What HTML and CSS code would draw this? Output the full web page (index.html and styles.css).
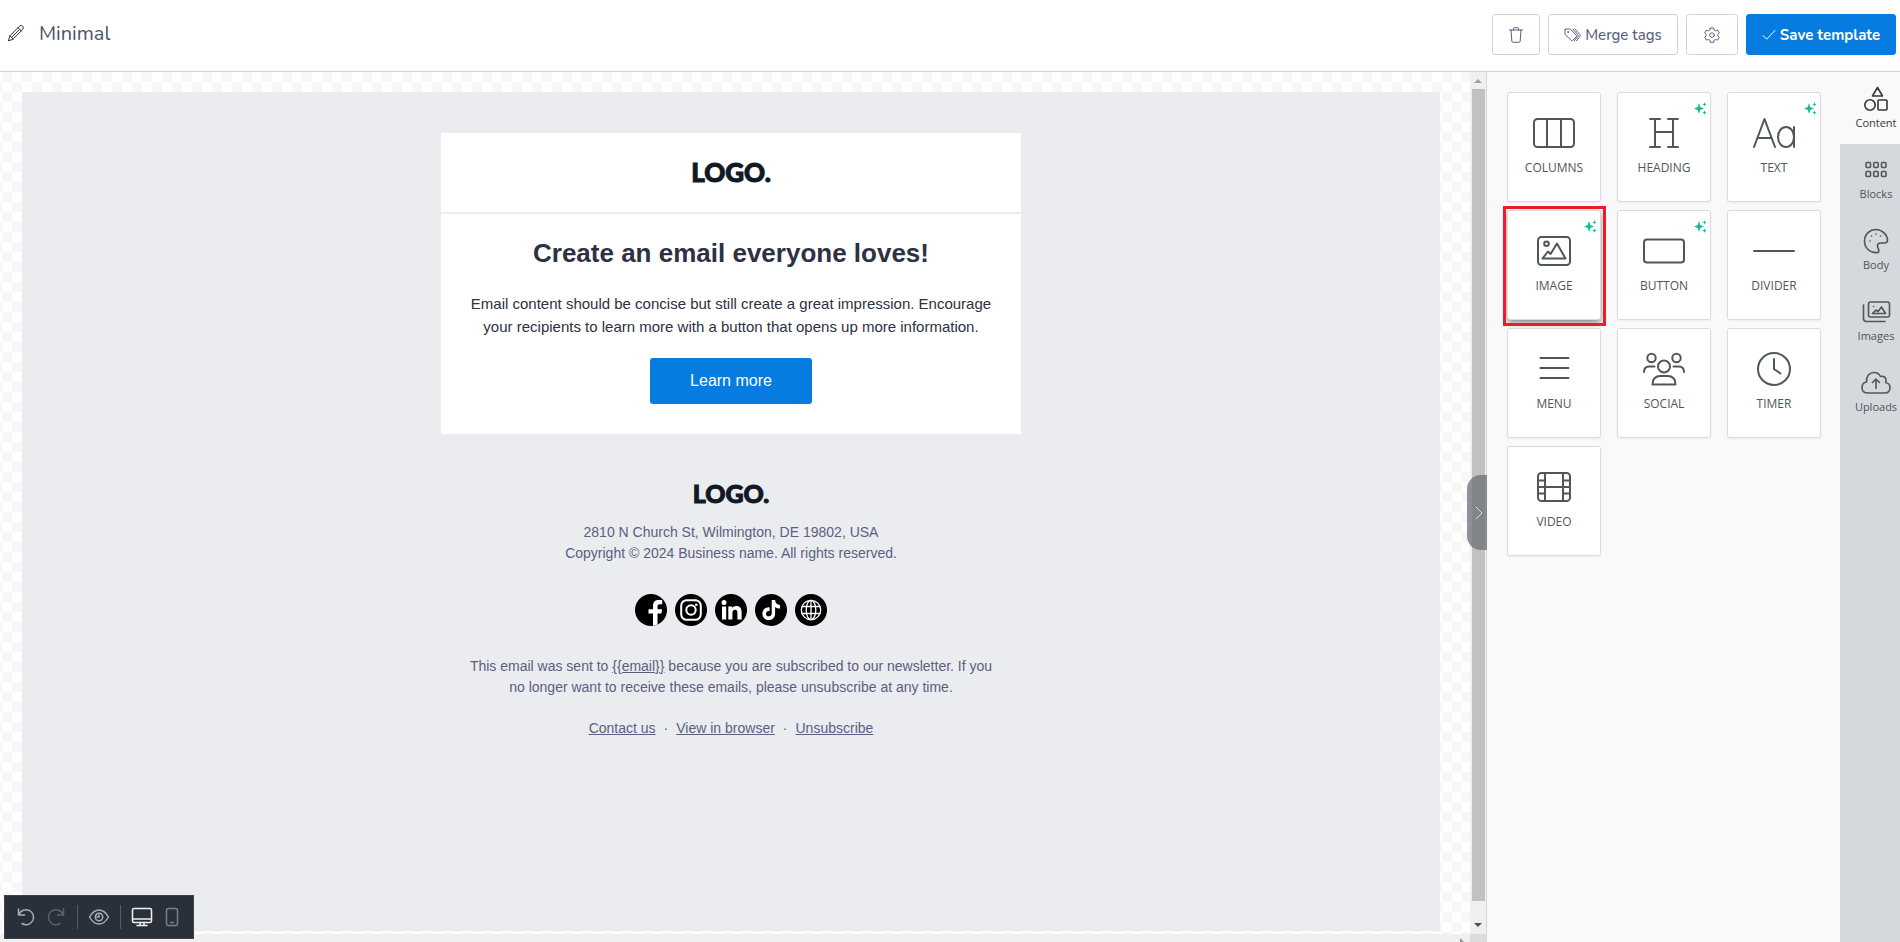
FILE: index.html
```html
<!DOCTYPE html>
<html lang="en">
<head>
    <meta charset="UTF-8">
    <meta name="viewport" content="width=device-width, initial-scale=1.0">
    <title>Minimal</title>
    <link rel="stylesheet" href="styles.css">
</head>
<body>

    <header class="topbar">
        <div class="template-name">
            <svg width="18" height="18" viewBox="0 0 18 18"><path d="M1.500 16.500l1.400-4.700L12.500 2.200a2 2 0 0 1 3.200 3.200L6.200 15zM2.900 11.800L6.200 15M11 3.700L14.300 7M5 13L12.600 5.400"/></svg>
            <h1>Minimal</h1>
        </div>
        <div class="actions">
            <button class="btn btn-trash" aria-label="Delete">
                <svg width="16" height="16" viewBox="0 0 16 16"><path d="M1.500 3h13M5.500 3V1.500q0-.8.8-.8h3.400q.8 0 .8.8V3M3 3l.8 11q.1 1.300 1.300 1.300h5.800q1.200 0 1.300-1.300L13 3"/></svg>
            </button>
            <button class="btn btn-tags">
                <svg width="17" height="16" viewBox="0 0 17 16"><path d="M1 2.500v4.300q0 .6.4 1l5.800 5.600q.7.700 1.400 0l3.700-3.700q.7-.7 0-1.400L6.700 2.500q-.4-.5-1-.5H2q-1 0-1 .5zM8.700 2l5 5.600q.9 1 0 2L10.200 14M11 2l4.700 5.300q1 1.100 0 2.300L12.300 14"/><circle cx="4" cy="5" r=".5"/></svg>
                Merge tags
            </button>
            <button class="btn btn-settings" aria-label="Settings">
                <svg width="16" height="16" viewBox="0 0 16 16"><path d="M6.300 1h3.400l.5 2 1.400.8 2-.6 1.700 2.900-1.500 1.300v1.500l1.500 1.300-1.700 2.900-2-.6-1.400.8-.5 2H6.300l-.5-2-1.400-.8-2 .6L.7 10.200l1.500-1.300V7.400L.7 6.100l1.700-2.900 2 .6L5.800 3z"/><circle cx="8" cy="8.100" r="2.300"/></svg>
            </button>
            <button class="btn btn-save">
                <svg width="14" height="12" viewBox="0 0 14 12"><path d="M1 6.500l3.700 3.700L13 1.500"/></svg>
                Save template
            </button>
        </div>
    </header>

    <div class="editor">
        <main class="stage">
            <div class="viewport">
                <div class="canvas">
                    <div class="email">
                        <div class="email-head"><span class="logo">LOGO.</span></div>
                        <div class="email-body">
                            <h2>Create an email everyone loves!</h2>
                            <p>Email content should be concise but still create a great impression. Encourage your recipients to learn more with a button that opens up more information.</p>
                            <a class="cta" href="#">Learn more</a>
                        </div>
                        <footer class="email-footer">
                            <span class="logo logo-small">LOGO.</span>
                            <p>2810 N Church St, Wilmington, DE 19802, USA<br>Copyright © 2024 Business name. All rights reserved.</p>
                            <div class="socials">
                                <a href="#" aria-label="Facebook"><svg viewBox="0 0 32 32"><circle cx="16" cy="16" r="16"/><path class="w" d="M18 31.900V19.500h-4.500v-4.300H18v-3.400c0-4 2.200-5.800 5.600-5.800h3.600v4.200h-2.400c-1.700 0-2.300.7-2.300 2.100v2.900h4.600l-.7 4.300h-3.900v11z"/></svg></a>
                                <a href="#" aria-label="Instagram"><svg viewBox="0 0 32 32"><circle cx="16" cy="16" r="16"/><rect class="l" x="6.200" y="6.200" width="19.600" height="19.600" rx="5.500"/><circle class="l" cx="16" cy="16" r="4.700"/><circle class="w" cx="21.300" cy="10.700" r="1.300"/></svg></a>
                                <a href="#" aria-label="LinkedIn"><svg viewBox="0 0 32 32"><circle cx="16" cy="16" r="16"/><circle class="w" cx="9" cy="8.500" r="2.500"/><path class="w" d="M7 12.400h4.200V25.500H7zM13.300 12.400h4v1.800c.7-1.200 2.100-2.100 4-2.100 4 0 5.300 2.400 5.300 6.300v7.100h-4.200v-6.500c0-1.800-.3-3.200-2.300-3.200-1.900 0-2.700 1.300-2.700 3.200v6.500h-4.100z"/></svg></a>
                                <a href="#" aria-label="TikTok"><svg viewBox="0 0 32 32"><circle cx="16" cy="16" r="16"/><path class="w" d="M16.700 6h3.400c.2 2.800 1.900 4.700 4.900 5v3.500c-1.900 0-3.500-.5-4.900-1.500v6.700c0 8.300-12.600 8.500-12.700 0 0-3.900 3.200-6.800 7.200-6.300v3.600c-2-.5-3.600.7-3.600 2.700 0 3.500 5.700 3.500 5.700-.3z"/></svg></a>
                                <a href="#" aria-label="Website"><svg viewBox="0 0 32 32"><circle cx="16" cy="16" r="16"/><g class="g"><circle cx="16" cy="16" r="9.700"/><ellipse cx="16" cy="16" rx="4.800" ry="9.700"/><path d="M16 6.500v19M7 12.500h18M7 19.500h18"/></g></svg></a>
                            </div>
                            <p>This email was sent to <a href="#">{{email}}</a> because you are subscribed to our newsletter. If you no longer want to receive these emails, please unsubscribe at any time.</p>
                            <nav class="email-links">
                                <a href="#">Contact us</a><span>·</span><a href="#">View in browser</a><span>·</span><a href="#">Unsubscribe</a>
                            </nav>
                        </footer>
                    </div>
                </div>
                <div class="hscroll"><i></i></div>
            </div>
            <div class="vscroll"><i class="up"></i><div class="thumb"></div><i class="down"></i><div class="corner"></div></div>

            <div class="device-bar">
                <button aria-label="Undo"><svg width="20" height="20" viewBox="0 0 20 20"><path d="M2.500 2v6h6M3 7.500a7.500 7.500 0 1 1 3 9"/></svg></button>
                <button class="dim" aria-label="Redo"><svg width="20" height="20" viewBox="0 0 20 20"><path d="M17.500 2v6h-6M17 7.500a7.500 7.500 0 1 0-3 9"/></svg></button>
                <hr>
                <button aria-label="Preview"><svg width="22" height="18" viewBox="0 0 22 18"><path d="M1.500 9Q5.500 2 11 2t9.500 7Q16.500 16 11 16T1.500 9z"/><circle cx="11" cy="9" r="3.700"/><path d="M11 7v2H9"/></svg></button>
                <hr>
                <button class="on" aria-label="Desktop"><svg width="22" height="20" viewBox="0 0 22 20"><rect x="1.500" y="1.500" width="19" height="14" rx="1.500"/><path d="M1.500 12h19M9 15.500V18m4-2.500V18m-7 .5h10"/></svg></button>
                <button class="dim phone" aria-label="Mobile"><svg width="14" height="20" viewBox="0 0 14 20"><rect x="1.500" y="1.500" width="11" height="17" rx="2"/><path d="M5.500 15.500h3"/></svg></button>
            </div>
            <button class="collapse" aria-label="Collapse panel"><svg width="8" height="14" viewBox="0 0 8 14"><path d="M1 1l6 6-6 6"/></svg></button>
        </main>

        <aside class="panel">
            <div class="tools">
                <button class="tool">
                    <svg class="icon" viewBox="0 0 44 36"><rect x="2" y="4" width="40" height="28" rx="3.500"/><path d="M15 4v28M29 4v28"/></svg>
                    <span>COLUMNS</span>
                </button>
                <button class="tool ai">
                    <svg class="icon" viewBox="0 0 44 36"><path d="M8 4h10M26 4h10M8 32h10M26 32h10M13 4v28M31 4v28M13 17h18"/></svg>
                    <span>HEADING</span>
                    <svg class="spark" viewBox="0 0 13 13"><path d="M5 1l1.300 4L10 6.500 6.300 8 5 12 3.700 8 0 6.500 3.700 5zM10.500 0l.6 1.700 1.700.6-1.700.6-.6 1.700-.6-1.700-1.700-.6 1.700-.6zM10.500 8.300l.6 1.700 1.700.6-1.700.6-.6 1.700-.6-1.700-1.700-.6 1.700-.6z"/></svg>
                </button>
                <button class="tool ai">
                    <svg class="icon" viewBox="0 0 44 36"><path d="M2 32L12.500 4 23 32M5.500 23h14M42 12v20"/><ellipse cx="34" cy="22" rx="8" ry="10"/></svg>
                    <span>TEXT</span>
                    <svg class="spark" viewBox="0 0 13 13"><path d="M5 1l1.300 4L10 6.500 6.300 8 5 12 3.700 8 0 6.500 3.700 5zM10.500 0l.6 1.700 1.700.6-1.700.6-.6 1.700-.6-1.700-1.700-.6 1.700-.6zM10.500 8.300l.6 1.700 1.700.6-1.700.6-.6 1.700-.6-1.700-1.700-.6 1.700-.6z"/></svg>
                </button>
                <button class="tool ai highlighted">
                    <svg class="icon" viewBox="0 0 44 36"><rect x="6" y="4" width="32" height="28" rx="3.500"/><circle cx="14.500" cy="10.800" r="2.300"/><path d="M10.500 25.500l5.500-7 2.500 2.500L25 10.500 33.500 25.500z"/></svg>
                    <span>IMAGE</span>
                    <svg class="spark" viewBox="0 0 13 13"><path d="M5 1l1.300 4L10 6.500 6.300 8 5 12 3.700 8 0 6.500 3.700 5zM10.500 0l.6 1.700 1.700.6-1.700.6-.6 1.700-.6-1.700-1.700-.6 1.700-.6zM10.500 8.300l.6 1.700 1.700.6-1.700.6-.6 1.700-.6-1.700-1.700-.6 1.700-.6z"/></svg>
                </button>
                <button class="tool ai">
                    <svg class="icon" viewBox="0 0 44 36"><rect x="2" y="6.500" width="40" height="23" rx="3"/></svg>
                    <span>BUTTON</span>
                    <svg class="spark" viewBox="0 0 13 13"><path d="M5 1l1.300 4L10 6.500 6.300 8 5 12 3.700 8 0 6.500 3.700 5zM10.500 0l.6 1.700 1.700.6-1.700.6-.6 1.700-.6-1.700-1.700-.6 1.700-.6zM10.500 8.300l.6 1.700 1.700.6-1.700.6-.6 1.700-.6-1.700-1.700-.6 1.700-.6z"/></svg>
                </button>
                <button class="tool">
                    <svg class="icon" viewBox="0 0 44 36"><path d="M2 18h40"/></svg>
                    <span>DIVIDER</span>
                </button>
                <button class="tool">
                    <svg class="icon" viewBox="0 0 44 36"><path d="M8.500 7h28M8.500 17h28M8.500 27h28"/></svg>
                    <span>MENU</span>
                </button>
                <button class="tool">
                    <svg class="icon" viewBox="0 0 44 36"><circle cx="9.500" cy="7" r="4.200"/><circle cx="34.500" cy="7" r="4.200"/><circle cx="22" cy="15.500" r="6"/><path d="M2 21q0-5.500 5-5.500h5.500M42 21q0-5.500-5-5.500h-5.500M10.500 33.500q0-8.500 8-8.500h7q8 0 8 8.500z"/></svg>
                    <span>SOCIAL</span>
                </button>
                <button class="tool">
                    <svg class="icon" viewBox="0 0 44 36"><circle cx="22" cy="18" r="16"/><path d="M22 8v10l6.500 4.500"/></svg>
                    <span>TIMER</span>
                </button>
                <button class="tool">
                    <svg class="icon" viewBox="0 0 44 36"><rect x="6" y="4" width="32" height="28" rx="3.500"/><path d="M13 4v28M31 4v28M13 18h18M6 11.500h7M6 18h7M6 24.500h7M31 11.500h7M31 18h7M31 24.500h7"/></svg>
                    <span>VIDEO</span>
                </button>
            </div>
            <nav class="tabs">
                <button class="tab active">
                    <svg width="30" height="26" viewBox="0 0 30 26"><path d="M16.500 1.500l5 8.500h-10z"/><circle cx="9" cy="19" r="5.200"/><rect x="17" y="14" width="9" height="10" rx="1"/></svg>
                    <span>Content</span>
                </button>
                <button class="tab">
                    <svg width="30" height="26" viewBox="0 0 30 26"><rect x="5" y="5.500" width="4.500" height="5" rx="1"/><rect x="12.700" y="5.500" width="4.500" height="5" rx="1"/><rect x="20.500" y="5.500" width="4.500" height="5" rx="1"/><rect x="5" y="14.500" width="4.500" height="5" rx="1"/><rect x="12.700" y="14.500" width="4.500" height="5" rx="1"/><rect x="20.500" y="14.500" width="4.500" height="5" rx="1"/></svg>
                    <span>Blocks</span>
                </button>
                <button class="tab">
                    <svg width="30" height="26" viewBox="0 0 30 26"><path d="M17 24.500C9 25.500 3.500 20 3.500 13S9 1.500 15 1.500 26.500 7 26.500 12q0 3-3 3h-4q-3 0-3 3 0 1.500 1 3 .8 2.500-.5 3.500z"/><path d="M9 13h.1M10.500 8h.1M15 6h.1M19.500 8h.1"/></svg>
                    <span>Body</span>
                </button>
                <button class="tab">
                    <svg width="30" height="26" viewBox="0 0 30 26"><rect x="7.500" y="3" width="21" height="15" rx="2"/><path d="M2.500 6v13.500q0 3 3 3H24M11.500 14.500l3.500-3.500 2 1.500L20.500 8l4 6.500zM12.500 7.500h.1"/></svg>
                    <span>Images</span>
                </button>
                <button class="tab">
                    <svg width="30" height="26" viewBox="0 0 30 26"><path d="M7 23C3 23 1 20.500 1 17.500 1 14.500 3 12.500 5.500 12 5 6 8.500 2.500 13 2.500q4.500 0 6.500 4c3-.8 5.500 1 5.500 3.500 0 1 0 2-.5 2.500 3 .5 4.500 2.500 4.500 5 0 3.500-2 5.500-5.500 5.500zM15 18.500V9M11.500 12.500L15 9l3.500 3.500"/></svg>
                    <span>Uploads</span>
                </button>
            </nav>
        </aside>
    </div>

</body>
</html>
```
FILE: styles.css
```css
* {
    box-sizing: border-box;
}
body {
    margin: 0;
    height: 100vh;
    display: flex;
    flex-direction: column;
    overflow: hidden;
    background-color: white;
    font-family: "Open Sans", "Noto Sans", sans-serif;
}
svg {
    fill: none;
    stroke: currentColor;
    stroke-linecap: round;
    stroke-linejoin: round;
}
button {
    font-family: inherit;
    border: none;
    padding: 0;
    cursor: pointer;
}

/* top bar */
.topbar {
    flex: none;
    height: 72px;
    padding: 14px 4px 0 7px;
    display: flex;
    justify-content: space-between;
    align-items: flex-start;
    border-bottom: 1px solid #cfd3df;
}
.template-name {
    display: flex;
    align-items: center;
    gap: 14px;
    height: 38px;
    color: #2d3142;
}
.template-name h1 {
    margin: 0;
    font-family: Nunito, "Noto Sans", sans-serif;
    font-size: 20px;
    font-weight: 400;
    color: #4a5568;
}
.actions {
    display: flex;
    gap: 8px;
}
.btn {
    height: 41px;
    display: flex;
    align-items: center;
    justify-content: center;
    gap: 4px;
    border: 1px solid #cfd3df;
    border-radius: 3px;
    background-color: white;
    color: #596080;
    font-family: Nunito, "Noto Sans", sans-serif;
    font-size: 15px;
    font-weight: 500;
}
.btn-trash {
    width: 48px;
}
.btn-tags {
    width: 130px;
}
.btn-settings {
    width: 52px;
}
.btn-save {
    width: 150px;
    border-color: #067ce0;
    background-color: #067ce0;
    color: white;
    font-weight: 700;
}

/* editor */
.editor {
    flex: 1;
    min-height: 0;
    display: flex;
}
.stage {
    position: relative;
    flex: 1;
    min-width: 0;
    display: flex;
    border-right: 1px solid #d4d6d9;
}
.viewport {
    flex: 1;
    min-width: 0;
    display: flex;
    flex-direction: column;
    background: conic-gradient(#ffffff 25%, #f7f7f7 0 50%, #ffffff 0 75%, #f7f7f7 0) 2px 0 / 20px 20px;
}
.canvas {
    flex: 1;
    margin: 20px 30px 3px 22px;
    padding: 41px 0;
    background-color: #ebecf0;
}
.email {
    max-width: 580px;
    margin: 0 auto;
    text-align: center;
    font-family: Arial, "Liberation Sans", sans-serif;
}
.email-head {
    height: 79px;
    padding-bottom: 2px;
    display: flex;
    align-items: center;
    justify-content: center;
    background-color: white;
}
.logo {
    font-family: Lato, sans-serif;
    font-size: 26px;
    font-weight: 900;
    line-height: 30px;
    color: #101924;
    -webkit-text-stroke: 1px #101924;
}
.logo-small {
    display: block;
    font-size: 25px;
}
.email-body {
    margin-top: 2px;
    padding: 23px 24px 30px;
    background-color: white;
}
.email-body h2 {
    margin: 0 0 23px;
    font-size: 26px;
    line-height: 32px;
    color: #2d3142;
}
.email-body p {
    margin: 0 0 20px;
    font-size: 15px;
    line-height: 23px;
    color: #2d3142;
}
.cta {
    display: inline-block;
    padding: 0 40px;
    border-radius: 3px;
    background-color: #067ce0;
    color: white;
    font-size: 16px;
    line-height: 46px;
    text-decoration: none;
    vertical-align: top;
}
.email-footer {
    padding: 44px 24px 0;
    font-size: 14px;
    line-height: 21px;
    color: #596080;
}
.email-footer p {
    margin: 14px 0 20px;
}
.email-footer a {
    color: inherit;
}
.socials {
    display: flex;
    justify-content: center;
    gap: 8px;
    margin: 30px 0;
}
.socials svg {
    display: block;
    width: 32px;
    height: 32px;
    fill: black;
    stroke: none;
}
.socials .w {
    fill: white;
}
.socials .l {
    fill: none;
    stroke: white;
    stroke-width: 2;
}
.socials .g {
    fill: none;
    stroke: white;
    stroke-width: 1.3;
}
.email-links {
    display: flex;
    justify-content: center;
    gap: 8px;
}

/* scroll bars */
.hscroll {
    height: 8px;
    overflow: hidden;
    display: flex;
    justify-content: flex-end;
    padding: 4px 2px 0 0;
    background-color: #f0f0f0;
}
.hscroll i {
    border: 4px solid transparent;
    border-left-color: #909090;
}
.vscroll {
    width: 16px;
    display: flex;
    flex-direction: column;
    align-items: center;
    background-color: #f0f0f0;
}
.vscroll i {
    border: 4px solid transparent;
}
.vscroll .up {
    margin: 7px 0 2px;
    border-top: none;
    border-bottom-color: #a0a0a0;
}
.vscroll .thumb {
    flex: 1;
    width: 13px;
    margin-top: 4px;
    background-color: #c1c1c1;
}
.vscroll .down {
    margin: 22px 0 7px;
    border-bottom: none;
    border-top-color: #505050;
}
.vscroll .corner {
    width: 100%;
    height: 8px;
    background-color: #dcdcdc;
}

/* floating controls over the canvas */
.device-bar {
    position: absolute;
    left: 4px;
    bottom: 3px;
    height: 44px;
    padding: 0 10px;
    display: flex;
    align-items: center;
    border: 1px solid #3c424b;
    background-color: #2a303a;
}
.device-bar button {
    width: 22px;
    display: flex;
    justify-content: center;
    background: none;
    color: #a9acb3;
}
.device-bar button + button {
    margin-left: 8px;
}
.device-bar svg {
    stroke-width: 1.5;
}
.device-bar .on {
    color: #f2f2f3;
}
.device-bar .dim {
    color: #5c626b;
}
.device-bar .phone {
    color: #7a7f87;
}
.device-bar hr {
    width: 1px;
    height: 24px;
    margin: 0 10px;
    border: none;
    background-color: #555a63;
}
.collapse {
    position: absolute;
    right: -1px;
    top: 403px;
    width: 20px;
    height: 75px;
    padding-left: 4px;
    display: flex;
    align-items: center;
    justify-content: center;
    border-radius: 14px 0 0 14px;
    background-color: rgba(107, 112, 118, 0.75);
    color: #d5d8dc;
}

/* right panel */
.panel {
    flex: none;
    width: 413px;
    display: flex;
    background-color: #f9f9f9;
}
.tools {
    flex: 1;
    padding: 20px 19px 20px 20px;
    display: grid;
    grid-template-columns: repeat(3, 1fr);
    grid-auto-rows: 110px;
    align-content: start;
    gap: 8px 16px;
}
.tool {
    position: relative;
    padding-top: 22px;
    display: flex;
    flex-direction: column;
    align-items: center;
    justify-content: flex-start;
    gap: 9px;
    border: 1px solid #dbdbdb;
    border-radius: 3px;
    box-shadow: 0 1px 2px rgba(0, 0, 0, 0.06);
    background-color: white;
    color: #505659;
    font-size: 12px;
    line-height: 16px;
}
.tool .icon {
    flex: none;
    width: 44px;
    height: 36px;
    stroke-width: 2;
}
.tool .spark {
    position: absolute;
    top: 9px;
    right: 3px;
    width: 13px;
    height: 13px;
    fill: #14bd94;
    stroke: none;
}
.highlighted {
    box-shadow: 0 3px 6px rgba(0, 0, 0, 0.45);
}
.highlighted::after {
    content: "";
    position: absolute;
    inset: -5px -6px -7px -5px;
    border: 3px solid #ee1c24;
}
.tabs {
    width: 60px;
    background-color: #d5d8dc;
}
.tab {
    width: 100%;
    height: 71px;
    padding: 13px 0 0 12px;
    display: flex;
    flex-direction: column;
    align-items: center;
    justify-content: flex-start;
    gap: 4px;
    background: none;
    color: #505659;
    font-size: 11px;
    line-height: 14px;
}
.tab svg {
    flex: none;
    stroke-width: 1.6;
}
.tab.active {
    height: 72px;
    padding-top: 14px;
    background-color: #f9f9f9;
    color: #33383c;
}
```
